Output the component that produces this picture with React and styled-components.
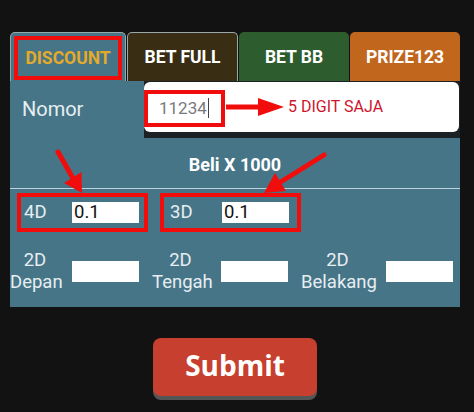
import React from "react";
import styled, { createGlobalStyle } from "styled-components";

const Global = createGlobalStyle`
  html, body { margin: 0; padding: 0; background: #121212; }
  body { font-family: Roboto, "Liberation Sans", sans-serif; }
  * { box-sizing: border-box; }
`;

const Page = styled.div`
  position: relative;
  width: 474px;
  height: 412px;
  background: #121212;
  padding: 32px 0 0 10px;
  overflow: hidden;
`;

const Frame = styled.div`
  width: 450px;
  display: flex;
  flex-direction: column;
`;

const Tabs = styled.div`
  display: flex;
  height: 49px;
  gap: 1px;
`;

const Tab = styled.div`
  flex: ${(p) => p.$w} 0 0;
  background: ${(p) => p.$bg};
  border: ${(p) => (p.$border ? "1px solid #9aa7ab" : "none")};
  border-bottom: none;
  border-radius: 5px 5px 0 0;
  display: flex;
  align-items: center;
  justify-content: center;
  color: ${(p) => p.$color || "#ffffff"};
  font-weight: 700;
  font-size: 17.5px;
  padding: ${(p) => p.$pad || "0"};
`;

const Marked = styled.div`
  border: 4px solid #f20d0d;
  width: 100%;
  height: 100%;
  display: flex;
  align-items: center;
  justify-content: center;
`;

const Panel = styled.div`
  background: #467587;
  height: 226px;
  display: flex;
  flex-direction: column;
`;

const NomorRow = styled.div`
  display: grid;
  grid-template-columns: 134px 1fr;
  height: 57px;
`;

const NomorLabel = styled.div`
  color: #e6eef2;
  font-size: 20px;
  padding-left: 12px;
  display: flex;
  align-items: center;
  padding-bottom: 2px;
`;

const NomorFrame = styled.div`
  background: #1b2124;
  padding: 1px 1px 6px 1px;
`;

const NomorBox = styled.div`
  background: #ffffff;
  border-radius: 6px;
  height: 100%;
  display: flex;
  align-items: center;
  padding-top: 2px;
  margin-left: -1px;
`;

const NumberMark = styled.div`
  border: 4px solid #f20d0d;
  width: 81px;
  height: 37px;
  display: flex;
  align-items: center;
  padding-left: 11px;
  color: #7a7a7a;
  font-size: 17px;
`;

const Caret = styled.span`
  display: inline-block;
  width: 1px;
  height: 20px;
  background: #444;
  margin-left: 1px;
`;

const Hint = styled.div`
  margin-left: 63px;
  color: #d0142c;
  font-size: 16px;
  margin-top: -4px;
`;

const Title = styled.div`
  height: 50px;
  display: flex;
  align-items: center;
  justify-content: center;
  color: #ffffff;
  font-weight: 700;
  font-size: 18px;
  padding-top: 3px;
`;

const Divider = styled.div`
  height: 1px;
  background: #bcd2da;
`;

const DiscRow = styled.div`
  height: 46px;
  display: flex;
  align-items: center;
  padding-left: 7px;
  gap: 12px;
`;

const DiscBox = styled.div`
  border: 4px solid #f20d0d;
  height: 39px;
  width: ${(p) => p.$w}px;
  display: flex;
  align-items: center;
  padding-left: ${(p) => p.$pl}px;
`;

const DiscLabel = styled.div`
  color: #e6eef2;
  font-size: 18.5px;
  width: ${(p) => p.$w}px;
`;

const Field = styled.div`
  width: 67px;
  height: 21px;
  background: #ffffff;
  color: #111;
  font-size: 18.5px;
  line-height: 21px;
  padding-left: 2px;
`;

const TwoDRow = styled.div`
  flex: 1;
  display: flex;
  align-items: center;
  gap: 13px;
`;

const TwoDCell = styled.div`
  display: flex;
  align-items: center;
  gap: 12px;
`;

const TwoDLabel = styled.div`
  color: #e6eef2;
  font-size: 18.5px;
  line-height: 22px;
  text-align: center;
  width: ${(p) => p.$w}px;
`;

const SubmitWrap = styled.div`
  display: flex;
  justify-content: center;
  padding-top: 31px;
`;

const Submit = styled.button`
  width: 164px;
  height: 58px;
  background: #c73f2e;
  border: none;
  border-radius: 8px;
  box-shadow: 0 4px 0 #555555;
  color: #ffffff;
  font-family: "Open Sans", "Liberation Sans", sans-serif;
  font-weight: 700;
  font-size: 28px;
  padding: 0 0 4px 0;
`;

const Overlay = styled.svg`
  position: absolute;
  left: 0;
  top: 0;
  pointer-events: none;
`;

export default function App() {
  return (
    <>
      <Global />
      <Page>
        <Frame>
          <Tabs>
            <Tab $w={111} $bg="#467587" $border $pad="3px 3px 1px 3px" $color="#e3aa2b">
              <Marked>DISCOUNT</Marked>
            </Tab>
            <Tab $w={112} $bg="#392d14" $border>BET FULL</Tab>
            <Tab $w={113} $bg="#2d5d2f">BET BB</Tab>
            <Tab $w={113} $bg="#c1661d">PRIZE123</Tab>
          </Tabs>
          <Panel>
            <NomorRow>
              <NomorLabel>Nomor</NomorLabel>
              <NomorFrame>
                <NomorBox>
                  <NumberMark>
                    11234<Caret />
                  </NumberMark>
                  <Hint>5 DIGIT SAJA</Hint>
                </NomorBox>
              </NomorFrame>
            </NomorRow>
            <Title>Beli X 1000</Title>
            <Divider />
            <DiscRow>
              <DiscBox $w={131} $pl={3}>
                <DiscLabel $w={48}>4D</DiscLabel>
                <Field>0.1</Field>
              </DiscBox>
              <DiscBox $w={141} $pl={6}>
                <DiscLabel $w={52}>3D</DiscLabel>
                <Field>0.1</Field>
              </DiscBox>
            </DiscRow>
            <TwoDRow>
              <TwoDCell>
                <TwoDLabel $w={50}>2D<br />Depan</TwoDLabel>
                <Field />
              </TwoDCell>
              <TwoDCell>
                <TwoDLabel $w={57}>2D<br />Tengah</TwoDLabel>
                <Field />
              </TwoDCell>
              <TwoDCell>
                <TwoDLabel $w={73}>2D<br />Belakang</TwoDLabel>
                <Field />
              </TwoDCell>
            </TwoDRow>
          </Panel>
          <SubmitWrap>
            <Submit>Submit</Submit>
          </SubmitWrap>
        </Frame>
        <Overlay width="474" height="412" viewBox="0 0 474 412">
          <g fill="#f20d0d" stroke="#f20d0d">
            <line x1="226" y1="107" x2="262" y2="107" strokeWidth="5" />
            <polygon points="258,98 284,107 258,116" stroke="none" />
            <line x1="58" y1="152" x2="74" y2="180" strokeWidth="5" strokeLinecap="round" />
            <polygon points="64,183 82,193 81.5,172" stroke="none" />
            <line x1="324" y1="155" x2="279" y2="183" strokeWidth="5" strokeLinecap="round" />
            <polygon points="286,191 264,193 275,173" stroke="none" />
          </g>
        </Overlay>
      </Page>
    </>
  );
}
